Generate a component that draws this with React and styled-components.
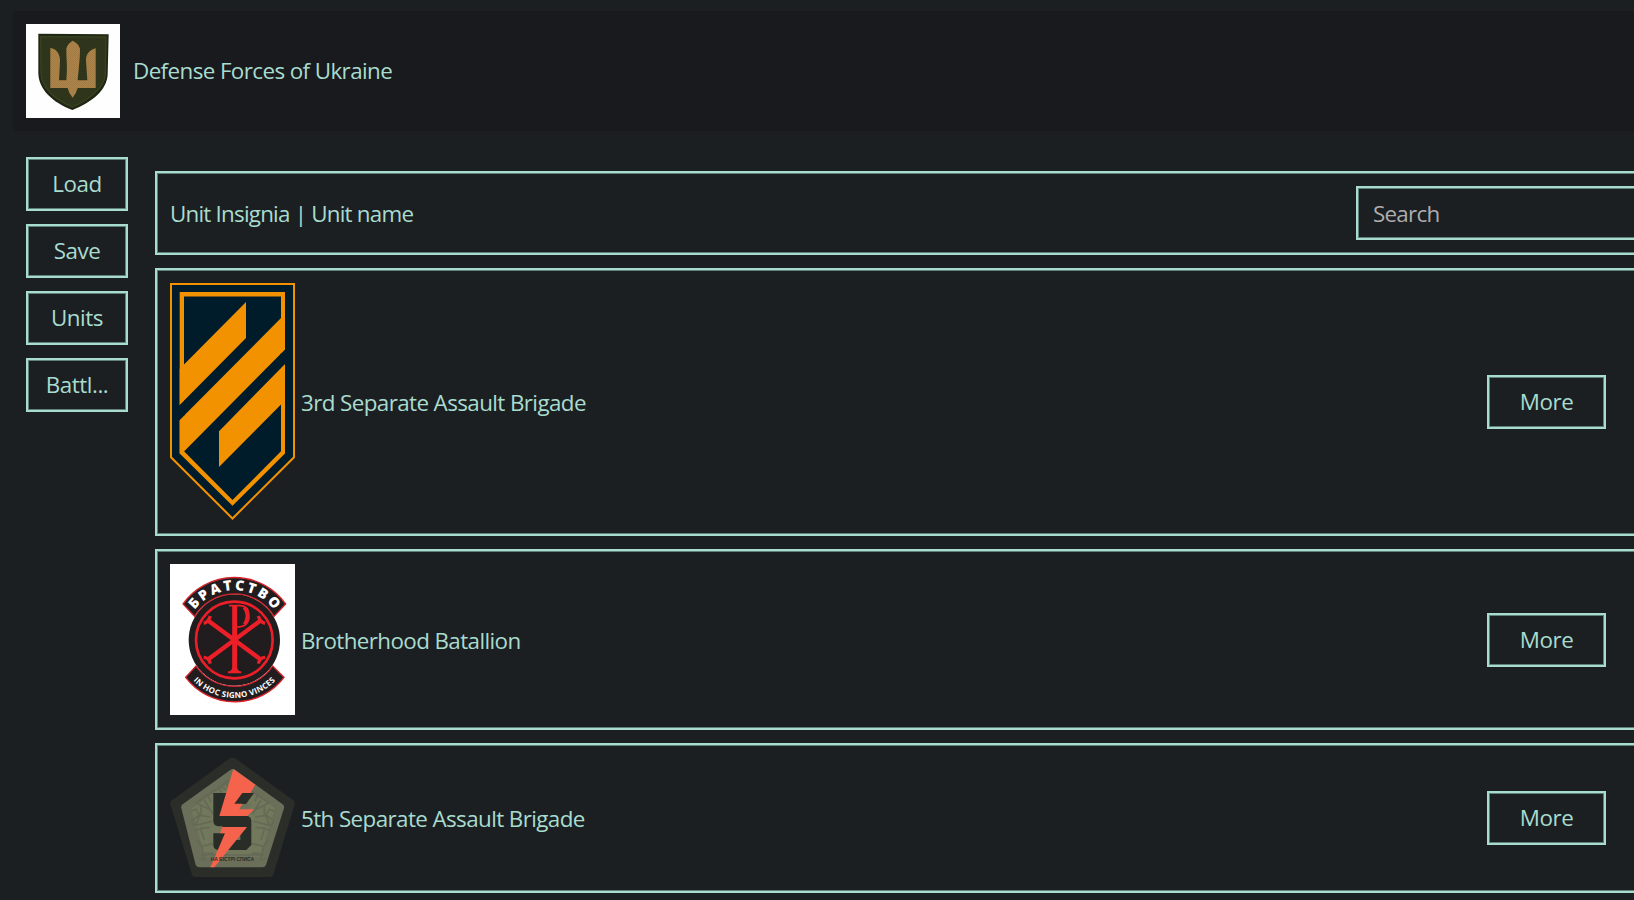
import React from 'react';
import styled, { createGlobalStyle, css } from 'styled-components';

const MINT = '#a8dccf';
const MINT_DIM = '#62807a';

const GlobalStyle = createGlobalStyle`
  * { box-sizing: border-box; }
  html, body { height: 100%; }
  body {
    margin: 0;
    overflow: hidden;
    background: #1c1f22;
    color: ${MINT};
    font-family: 'Open Sans', 'Noto Sans', sans-serif;
    font-size: 22.4px;
    line-height: 30px;
    letter-spacing: -0.6px;
  }
`;

const frame = css`
  border: 2px solid ${MINT};
  box-shadow: inset 0 0 0 1px ${MINT_DIM};
`;

const Page = styled.div`
  width: 100vw;
  height: 100vh;
  overflow: hidden;
  padding: 11px 0 0 13px;
`;

const Header = styled.header`
  display: flex;
  align-items: center;
  gap: 13px;
  height: 120px;
  padding: 0 13px;
  background: #191a1d;
`;

const Title = styled.span`
  white-space: nowrap;
  letter-spacing: ${(p) => p.$spacing || '-0.6px'};
`;

const Body = styled.div`
  display: flex;
  align-items: flex-start;
  gap: 27px;
  padding: 26px 0 0 13px;
`;

const Sidebar = styled.nav`
  display: flex;
  flex-direction: column;
  flex: none;
  gap: 13px;
  width: 102px;
`;

const Button = styled.button`
  ${frame}
  flex: none;
  width: ${(p) => p.$width || '100%'};
  height: 54px;
  margin: 0 ${(p) => p.$marginRight || 0} 0 0;
  padding: 0;
  background: transparent;
  color: inherit;
  font: inherit;
  letter-spacing: -0.45px;
`;

const UnitList = styled.main`
  display: flex;
  flex-direction: column;
  flex: none;
  gap: 13px;
  width: 1500px;
  padding-top: 14px;
`;

const Row = styled.section`
  ${frame}
  display: flex;
  align-items: center;
  justify-content: space-between;
  padding: 13px;

  ${Title} { padding-top: 2px; }
`;

const Unit = styled.div`
  display: flex;
  align-items: center;
  gap: 6px;
`;

const SearchInput = styled.input`
  ${frame}
  width: 284px;
  height: 54px;
  padding: 0 15px;
  border-radius: 0;
  background: transparent;
  color: ${MINT};
  font: inherit;
  letter-spacing: -0.75px;
  outline: none;
  &::placeholder { color: #adadad; opacity: 1; }
`;

const Emblem = styled.svg`
  display: block;
  flex: none;
`;

function ArmyEmblem() {
  return (
    <Emblem width="94" height="94" viewBox="18 12 282 282">
      <defs>
        <pattern id="weave" width="6" height="6" patternUnits="userSpaceOnUse">
          <path d="M0 0L6 4" stroke="#3a4220" strokeWidth="1.2" />
        </pattern>
        <pattern id="thread" width="6" height="6" patternUnits="userSpaceOnUse">
          <path d="M0 6L6 0" stroke="#bd945a" strokeWidth="1.4" />
        </pattern>
      </defs>
      <rect x="18" y="12" width="282" height="282" fill="#fefefe" />
      <path d="M55 41L266 43L263 162C262 210 215 248 157 270C98 247 55 208 55 158Z" fill="#1f2613" />
      <path d="M62 50L258 51L256 162C254 202 210 238 157 261C104 239 63 202 63 158Z" fill="#2b3219" stroke="#39431f" strokeWidth="4" />
      <path d="M62 50L258 51L256 162C254 202 210 238 157 261C104 239 63 202 63 158Z" fill="url(#weave)" />
      <g id="trident">
        <path d="M91 84C109 86 120 101 120 121L117 181H139C143 148 139 113 139 86Q142 71 158 62Q176 71 180 86C180 113 176 148 173 181H202L198 121C198 101 209 90 227 85V204H173Q168 222 158 233Q147 222 143 204H91Z" fill="#a37c44" />
        <path d="M91 84C109 86 120 101 120 121L117 181H139C143 148 139 113 139 86Q142 71 158 62Q176 71 180 86C180 113 176 148 173 181H202L198 121C198 101 209 90 227 85V204H173Q168 222 158 233Q147 222 143 204H91Z" fill="url(#thread)" opacity=".7" />
      </g>
    </Emblem>
  );
}

function ThirdBrigade() {
  return (
    <Emblem width="125" height="238" viewBox="0 0 125 238">
      <path d="M1 1H124V174.3L62.5 235.5L1 174.3Z" fill="#001b29" stroke="#f39200" strokeWidth="2" />
      <path fillRule="evenodd" fill="#f39200" d="M9.7 9H115V170.5L62.5 222.8L9.7 170.5ZM14 13.4V168.3L62.5 217L111 168.3V13.4Z" />
      <path fill="#f39200" d="M9.7 86L14 81.5L76 19V55L9.7 122ZM9.7 137L111 35L115 31V66.5L14 168.5L9.7 170.5ZM115 81L49 148.3V184L111 121.5L115 118Z" />
      <path fill="#001b29" d="M9 122.7L14.5 117.2V132.2L9 137.7ZM115.6 65.9V80.4L110.5 85.6V71Z" />
    </Emblem>
  );
}

function Brotherhood() {
  return (
    <Emblem width="125" height="151" viewBox="30 27 375 453" preserveAspectRatio="none">
      <defs>
        <path id="upperArc" d="M75.8 228A149.7 149.7 0 0 1 370.2 228" />
        <path id="lowerArc" d="M52.5 285A173 173 0 0 0 393.5 285" />
      </defs>
      <rect x="30" y="27" width="375" height="453" fill="#fff" />
      <g fill="#211d1f">
        <circle cx="223" cy="255" r="137" />
        <path d="M69 147A189 189 0 0 1 377 147L342 184A139 139 0 0 0 104 184Z" stroke="#d8232c" strokeWidth="4" />
        <path d="M77 367A185 185 0 0 0 372 367L338 333A139 139 0 0 1 108 333Z" stroke="#d8232c" strokeWidth="4" />
      </g>
      <g fill="none" stroke="#ec1f29">
        <circle cx="223" cy="255" r="115" strokeWidth="8" />
        <path d="M145 197L303 314M301 197L143 314" strokeWidth="13" />
        <path d="M131 205Q145 202 151 183M295 183Q301 202 315 205M131 307Q146 307 151 326M295 326Q300 307 315 307" strokeWidth="10" />
        <path d="M224 152V350" strokeWidth="15" />
        <path d="M207 152H240Q267 153 267 183Q267 216 231 216" strokeWidth="5" />
        <path d="M252 157Q270 181 253 208" strokeWidth="9" />
        <path d="M204 352Q216 350 219 341H229Q232 350 244 352Z" fill="#ec1f29" strokeWidth="5" />
      </g>
      <g fill="#fff" fontFamily="Open Sans, sans-serif">
        <text fontSize="42" fontWeight="800" letterSpacing="0" textAnchor="middle">
          <textPath href="#upperArc" startOffset="50%" textLength="276">БРАТСТВО</textPath>
        </text>
        <text fontSize="24" fontWeight="700" letterSpacing="0" textAnchor="middle">
          <textPath href="#lowerArc" startOffset="50%" textLength="275">IN HOC SIGNO VINCES</textPath>
        </text>
      </g>
    </Emblem>
  );
}

function FifthBrigade() {
  const ornament = 'M194 90L112 146L94 158L108 166L137 180M108 166V190L78 215M78 184L93 178L104 196L92 226L80 220M92 226L140 214M104 196L136 201M88 243L107 235L118 270M107 235L135 232M96 270L110 289L145 281M110 289L120 330L102 325M120 310H145M126 131L137 154M118 150L144 192M149 122L160 113L170 128M158 108L184 118M181 94L190 113';
  return (
    <Emblem width="125" height="120" viewBox="15 24 375 360">
      <path d="M194 25Q203 22 211 25L388 153Q391 157 389 164L325 374Q323 381 316 381H91Q84 381 81 374L16 164Q14 157 18 153Z" fill="#2a2d28" />
      <path d="M197 59Q204 55 211 60L353 163Q359 168 357 175L303 345Q300 352 293 352H103Q95 352 92 345L49 175Q47 168 53 163Z" fill="#6b6f59" />
      <path d="M203 91L330 174L285 320H121L78 176Z" fill="#72785c" />
      <g fill="none" stroke="#656a55" strokeWidth="5">
        <path d={ornament} />
        <path d={ornament} transform="translate(406 0) scale(-1 1)" />
        <path d="M108 315H297M150 311V334M253 311V334" />
      </g>
      <path fill="#292d27" d="M145 129H267L243 162H209L164 198H246Q259 200 259 214V285L244 300H160Q145 298 145 284V250H180L172 229H160Q145 227 145 213Z" />
      <path fill="#6d735a" d="M237 162H259L251 178H218ZM213 266L226 253V270H211Z" />
      <path fill="#f5634c" d="M205 57L271 104L256 129H232L208 161H232L223 178H267L247 198H163Z" />
      <path fill="#f5634c" d="M172 231H246L148 352H136L180 250H165Z" />
      <text x="137" y="333" fill="#292d27" fontFamily="Liberation Sans, sans-serif" fontSize="17" fontWeight="700" letterSpacing="0" textLength="130" lengthAdjust="spacingAndGlyphs">НА ВІСТРІ СПИСА</text>
    </Emblem>
  );
}

const UNITS = [
  { name: '3rd Separate Assault Brigade', Insignia: ThirdBrigade },
  { name: 'Brotherhood Batallion', Insignia: Brotherhood },
  { name: '5th Separate Assault Brigade', Insignia: FifthBrigade },
];

export default function App() {
  return (
    <Page>
      <GlobalStyle />
      <Header>
        <ArmyEmblem />
        <Title>Defense Forces of Ukraine</Title>
      </Header>
      <Body>
        <Sidebar>
          {['Load', 'Save', 'Units', 'Battl...'].map((label) => (
            <Button key={label}>{label}</Button>
          ))}
        </Sidebar>
        <UnitList>
          <Row>
            <Title $spacing="-0.78px">Unit Insignia | Unit name</Title>
            <SearchInput placeholder="Search" />
          </Row>
          {UNITS.map(({ name, Insignia }) => (
            <Row key={name}>
              <Unit>
                <Insignia />
                <Title>{name}</Title>
              </Unit>
              <Button $width="119px" $marginRight="34px">More</Button>
            </Row>
          ))}
        </UnitList>
      </Body>
    </Page>
  );
}
